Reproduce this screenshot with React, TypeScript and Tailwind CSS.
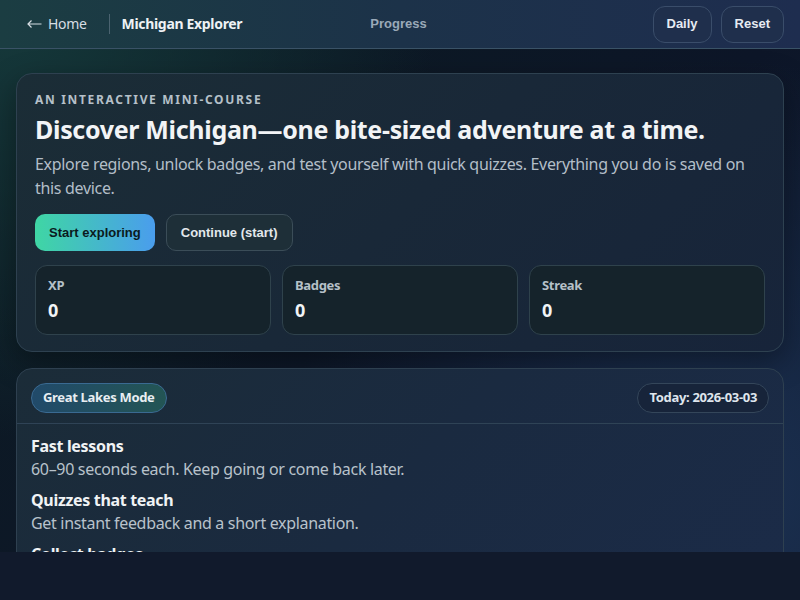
const stats = [
  { label: 'XP', value: '0' },
  { label: 'Badges', value: '0' },
  { label: 'Streak', value: '0' },
];

const features = [
  { title: 'Fast lessons', text: '60–90 seconds each. Keep going or come back later.' },
  { title: 'Quizzes that teach', text: 'Get instant feedback and a short explanation.' },
  { title: 'Collect badges', text: 'Earn rewards as you explore every region.' },
];

export default function App() {
  return (
    <div className="min-h-[600px] bg-[#111a2c] font-['Noto_Sans',sans-serif] tracking-[-0.02em] text-[#e8edf2]">
      <div className="h-[552px] overflow-hidden bg-[radial-gradient(circle_at_0%_0%,#163a3c_0%,transparent_45%),radial-gradient(circle_at_90%_90%,#1b3050_0%,transparent_50%),linear-gradient(135deg,#0c1c22,#0d1628_60%,#101c34)]">
        {/* Top bar */}
        <header className="h-[49px] border-b border-[#3a5266] bg-[linear-gradient(90deg,#1b3d42,#1c3249_50%,#1e2d4f)] px-[27px] flex items-center">
          <div className="flex items-center text-sm">
            <a className="flex items-center gap-[6px] text-[#d6dde3]">
              <svg width="15" height="10" viewBox="0 0 15 10" fill="none" stroke="#d6dde3" strokeWidth="1.2">
                <path d="M14.5 5H1M4.5 1.5L1 5l3.5 3.5" />
              </svg>
              Home
            </a>
            <div className="ml-[22px] mr-3 h-5 w-px bg-[#4b6370]" />
            <span className="font-bold text-[#eef2f5]">Michigan Explorer</span>
          </div>
          <span className="ml-[128px] font-['Liberation_Sans',sans-serif] tracking-normal text-[13px] font-bold text-[#9aa9b8]">
            Progress
          </span>
          <div className="ml-auto flex items-center gap-[9px] mr-[-11px] font-['Liberation_Sans',sans-serif] tracking-normal">
            <button className="h-[37px] px-[13px] rounded-xl border border-[#3a4d6a] bg-[#1f2f4c] text-[13px] font-bold text-[#e6ebf2]">
              Daily
            </button>
            <button className="h-[37px] px-[13px] rounded-xl border border-[#3a4d6a] bg-[#1f2f4c] text-[13px] font-bold text-[#e6ebf2]">
              Reset
            </button>
          </div>
        </header>

        <main className="px-4 pt-6 flex flex-col gap-4">
          {/* Hero card */}
          <section className="rounded-2xl border border-[#2e4150] bg-[linear-gradient(135deg,#1b2d36,#192838_50%,#17243a)] px-[18px] pt-[18px] pb-4 shadow-[0_10px_30px_rgba(0,0,0,0.35)]">
            <div className="text-xs font-bold tracking-[0.14em] text-[#b5c0c9]">AN INTERACTIVE MINI-COURSE</div>
            <h1 className="mt-[5px] text-[25px] leading-[32px] font-bold text-[#f2f4f6]">
              Discover Michigan—one bite-sized adventure at a time.
            </h1>
            <p className="mt-[7px] text-base leading-6 text-[#b3bec8]">
              Explore regions, unlock badges, and test yourself with quick quizzes. Everything you do is saved on this device.
            </p>
            <div className="mt-[14px] flex gap-[11px] font-['Liberation_Sans',sans-serif] tracking-normal">
              <button className="h-[37px] px-[14px] rounded-[10px] bg-[linear-gradient(90deg,#3fd6a4,#4a9ded)] text-[13px] font-bold text-[#0b1a20]">
                Start exploring
              </button>
              <button className="h-[37px] px-[14px] rounded-[10px] border border-[#3b4d58] bg-[#1e2f38] text-[13px] font-bold text-[#e3e8ec]">
                Continue (start)
              </button>
            </div>
            <div className="mt-[14px] grid grid-cols-3 gap-[11px]">
              {stats.map((s) => (
                <div key={s.label} className="h-[70px] rounded-xl border border-[#2f424c] bg-[#15232b] px-3 pt-[10px]">
                  <div className="text-[13px] font-bold text-[#b5c0c8]">{s.label}</div>
                  <div className="text-lg leading-7 font-bold text-[#f1f4f6]">{s.value}</div>
                </div>
              ))}
            </div>
          </section>

          {/* Features card */}
          <section className="rounded-2xl border border-[#2e4050] bg-[linear-gradient(135deg,#1b2c38,#1a2a40_50%,#1b2b48)]">
            <div className="flex items-center justify-between px-[14px] pt-[14px] pb-[10px] border-b border-[#2f4356]">
              <span className="h-[30px] px-[11px] flex items-center rounded-full border border-[#3a6a92] bg-[linear-gradient(90deg,#214a6a,#235554)] text-[13px] font-bold text-[#e8eef2]">
                Great Lakes Mode
              </span>
              <span className="h-[30px] px-[11px] flex items-center rounded-full border border-[#34465a] bg-[#17243a] text-[13px] font-bold text-[#dfe5ec]">
                Today: 2026-03-03
              </span>
            </div>
            <div className="px-[14px] pt-[11px] flex flex-col gap-[8px]">
              {features.map((f) => (
                <div key={f.title}>
                  <div className="text-base leading-[22px] font-bold text-[#f0f3f5]">{f.title}</div>
                  <div className="text-base leading-6 text-[#b8c2cb]">{f.text}</div>
                </div>
              ))}
            </div>
          </section>
        </main>
      </div>
    </div>
  );
}
